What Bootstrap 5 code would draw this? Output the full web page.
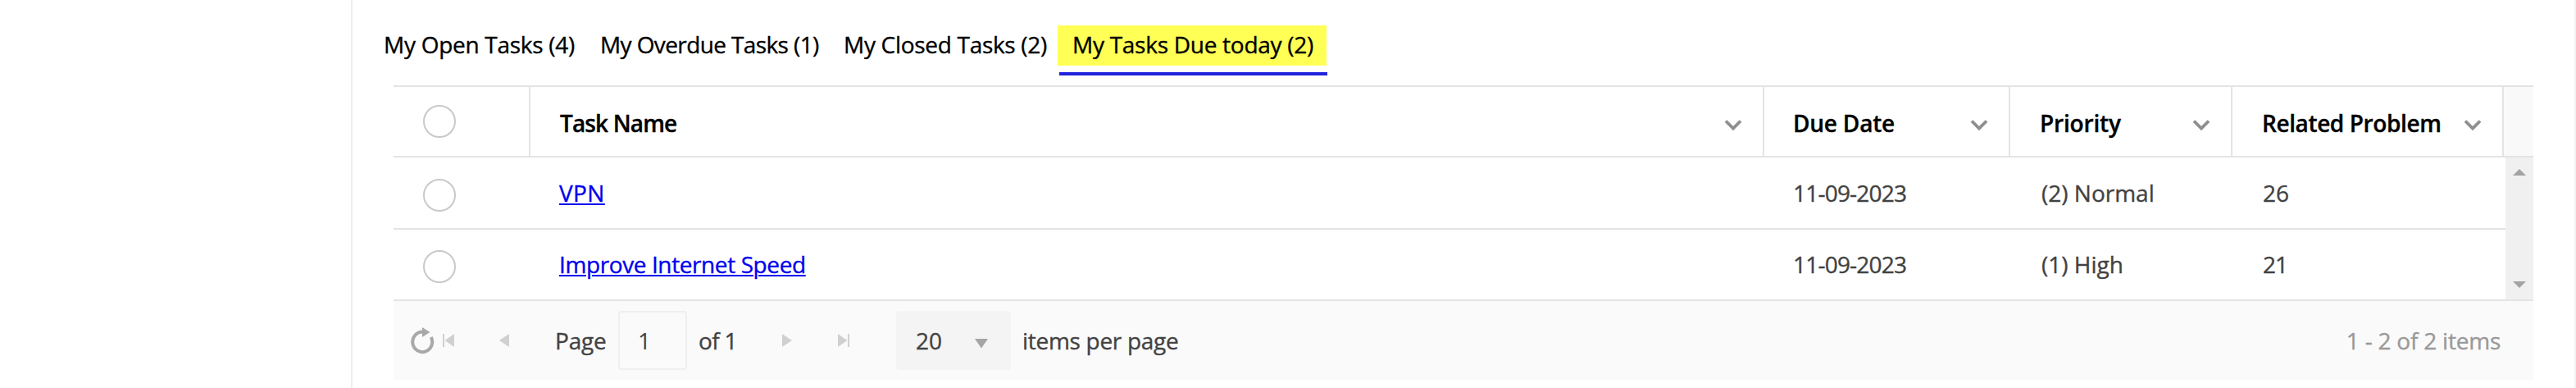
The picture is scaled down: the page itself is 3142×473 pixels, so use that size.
<!DOCTYPE html>
<html lang="en">
<head>
<meta charset="utf-8">
<title>My Tasks</title>
<link href="https://cdn.jsdelivr.net/npm/bootstrap@5.3.0/dist/css/bootstrap.min.css" rel="stylesheet">
<style>
body{font-family:"Open Sans","Noto Sans",sans-serif;font-size:28px;line-height:38px;color:#424242;background:#fff;overflow:hidden;-webkit-text-stroke:.35px currentColor}
.panel{margin-left:428px;height:473px;border-left:2px solid #eee;border-right:2px solid #f1f1f1;padding:31px 50px 0}
.tabs{height:73px;margin-left:-12px;color:#000;white-space:nowrap}
.tabs .tab{padding:4px 0 7px;color:#000;flex:none;height:49px;text-decoration:none}
.t1{width:264px;letter-spacing:-.28px}
.t2{width:297px;letter-spacing:-.61px}
.t3{width:261px;letter-spacing:-.3px}
.tabs .t4{width:328px;padding-left:18px;background:#ffff55;letter-spacing:-.27px;position:relative}
.t4::after{content:"";position:absolute;left:2px;top:57px;width:327px;height:4px;background:#2023dc}
.gridrow{display:grid;grid-template-columns:167px 1505px 300px 271px 331px 36px;border-bottom:2px solid #e4e4e4;white-space:nowrap}
.headrow{border-top:2px solid #e4e4e4;height:88px;color:#000;font-weight:600}
.headrow>div{border-right:2px solid #e4e4e4;padding:25px 25px 0 35px;display:flex;justify-content:space-between}
.headrow>div:first-child{padding:22px 0 0 36px}
.headrow>div:last-child{border:0;padding:0;background:#f9f9f9}
.headrow svg{margin-top:14px;flex:none}
.body-area{height:175px;border-bottom:2px solid #e4e4e4}
.body-area .gridrow{grid-template-columns:167px 1505px 300px 271px 333px}
.r1{height:88px;padding-top:24px}
.body-area .r2{height:85px;padding-top:23px;border:0}
.ring{width:40px;height:40px;border:2px solid #c9c9c9;border-radius:50%}
.r1 .ring,.r2 .ring{margin:2px 0 0 36px}
.gridrow a{color:#0000ee;text-decoration:underline;text-decoration-thickness:2px;text-underline-offset:2px;text-decoration-skip-ink:auto}
.scroll{width:34px;background:#f0f0f0;padding:14px 0}
.pager{height:96px;background:#fafafa;padding-top:12px;white-space:nowrap}
.pager>span{padding-top:17px;flex:none}
.pager svg{flex:none}
.pagebox{width:84px;height:72px;border:2px solid #efefef;border-radius:4px;padding:15px 0 0 22px;margin-left:14px;flex:none;-webkit-text-stroke:0}
.sizebox{width:140px;height:72px;border-radius:4px;background:#f4f4f4;padding:17px 0 0 24px;margin-left:57px;flex:none}
</style>
</head>
<body>
<main class="panel">
  <nav class="tabs d-flex">
    <a class="tab t1">My Open Tasks (4)</a><a class="tab t2">My Overdue Tasks (1)</a><a class="tab t3">My Closed Tasks (2)</a><a class="tab t4">My Tasks Due today (2)</a>
  </nav>
  <section>
    <div class="gridrow headrow">
      <div><span class="ring"></span></div>
      <div style="padding-left:36px;letter-spacing:-.86px">Task Name<svg width="22" height="15"><path d="M2 2.5L11 11.5L20 2.5" fill="none" stroke="#8e8e8e" stroke-width="3.8"/></svg></div>
      <div style="letter-spacing:-.22px">Due Date<svg width="22" height="15"><path d="M2 2.5L11 11.5L20 2.5" fill="none" stroke="#8e8e8e" stroke-width="3.8"/></svg></div>
      <div style="padding-left:36px;letter-spacing:-.17px">Priority<svg width="22" height="15"><path d="M2 2.5L11 11.5L20 2.5" fill="none" stroke="#8e8e8e" stroke-width="3.8"/></svg></div>
      <div style="padding-left:36px;letter-spacing:-.4px">Related Problem<svg width="22" height="15"><path d="M2 2.5L11 11.5L20 2.5" fill="none" stroke="#8e8e8e" stroke-width="3.8"/></svg></div>
      <div></div>
    </div>
    <div class="body-area d-flex">
      <div>
        <div class="gridrow r1">
          <div><div class="ring"></div></div>
          <div style="padding-left:35px;letter-spacing:.4px"><a href="#">VPN</a></div>
          <div style="padding-left:35px;letter-spacing:-.79px">11-09-2023</div>
          <div style="padding-left:38px">(2) Normal</div>
          <div style="padding-left:37px">26</div>
        </div>
        <div class="gridrow r2">
          <div><div class="ring"></div></div>
          <div style="padding-left:35px;letter-spacing:-.4px"><a href="#">Improve Internet Speed</a></div>
          <div style="padding-left:35px;letter-spacing:-.79px">11-09-2023</div>
          <div style="padding-left:38px">(1) High</div>
          <div style="padding-left:37px;letter-spacing:-1px">21</div>
        </div>
      </div>
      <div class="scroll d-flex flex-column justify-content-between align-items-center">
        <svg width="16" height="8"><path d="M0 8L8 0L16 8Z" fill="#a3a3a3"/></svg>
        <svg width="16" height="8"><path d="M0 0H16L8 8Z" fill="#a3a3a3"/></svg>
      </div>
    </div>
    <footer class="pager d-flex align-items-start">
      <svg width="199" height="72" viewBox="480 379 199 72">
        <path d="M515 404.5A12 12.3 0 1 0 525.8 411" fill="none" stroke="#a8a8a8" stroke-width="4"/>
        <path d="M515 399L524.5 405L515 411Z" fill="#a8a8a8"/>
        <path d="M540 407H542V423H540ZM554 407V423L542.5 415ZM621 407V423L609 415Z" fill="#d0d0d0"/>
      </svg>
      <span style="margin-left:-2px;width:63px;letter-spacing:-.2px">Page</span>
      <div class="pagebox">1</div>
      <span style="margin-left:14px;width:48px;letter-spacing:-.7px">of 1</span>
      <svg width="136" height="72" viewBox="900 379 136 72"><path d="M954 407L966 415L954 423ZM1022 407L1033.5 415L1022 423ZM1034 407H1036V423H1034Z" fill="#d0d0d0"/></svg>
      <div class="sizebox d-flex">20<svg class="ms-auto" width="44" height="30"><path d="M0 17H16L8 28.5Z" fill="#a5a5a5"/></svg></div>
      <span style="margin-left:14px;letter-spacing:-.29px">items per page</span>
      <span class="ms-auto" style="padding-right:40px;color:#999;letter-spacing:-.22px">1 - 2 of 2 items</span>
    </footer>
  </section>
</main>
<script src="https://cdn.jsdelivr.net/npm/bootstrap@5.3.0/dist/js/bootstrap.bundle.min.js"></script>
</body>
</html>
